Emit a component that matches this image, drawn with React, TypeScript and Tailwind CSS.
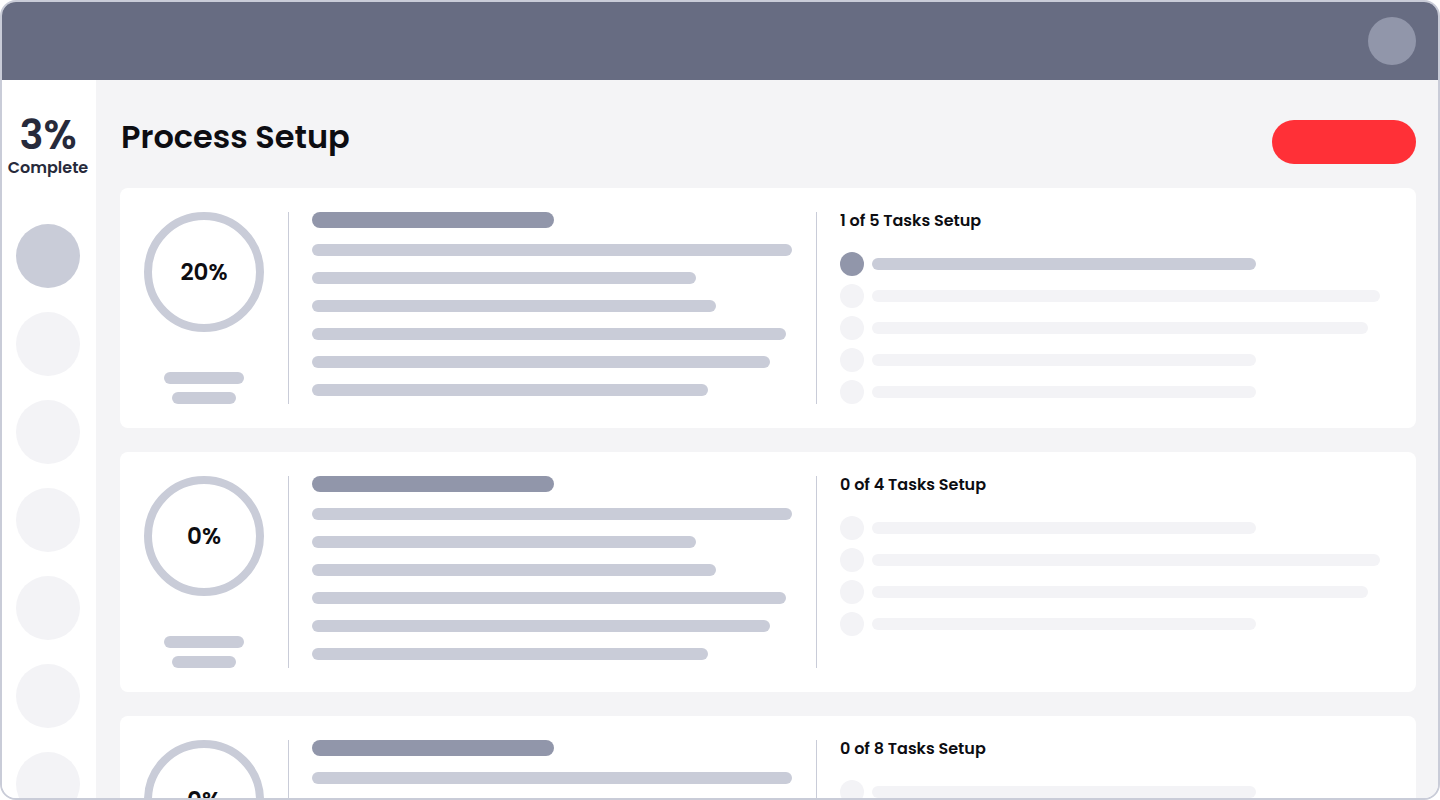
import React from "react";

const font = { fontFamily: "Poppins, Inter, 'Noto Sans', sans-serif" };

function Card({ pct, done, total, rows }: { pct: string; done: number; total: number; rows: { w: number; active?: boolean }[] }) {
  const mid = [480, 384, 404, 474, 458, 396];
  return (
    <div className="flex shrink-0 h-[240px] rounded-[8px] bg-white p-6">
      <div className="flex w-[120px] shrink-0 flex-col items-center">
        <div className="flex h-[120px] w-[120px] items-center justify-center rounded-full border-[8px] border-[#c9ccd8]">
          <span className="text-[23px] font-semibold text-[#0d0d12]">{pct}</span>
        </div>
        <div className="mt-[40px] h-3 w-[80px] rounded-full bg-[#c9ccd8]" />
        <div className="mt-2 h-3 w-[64px] rounded-full bg-[#c9ccd8]" />
      </div>
      <div className="ml-6 mr-[23px] h-[192px] w-px shrink-0 bg-[#c9ccd8]" />
      <div className="flex w-[480px] shrink-0 flex-col">
        <div className="h-4 w-[242px] rounded-full bg-[#9196aa]" />
        <div className="mt-4 flex flex-col gap-4">
          {mid.map((w, i) => (
            <div key={i} className="h-3 rounded-full bg-[#c9ccd8]" style={{ width: w }} />
          ))}
        </div>
      </div>
      <div className="ml-6 mr-[23px] h-[192px] w-px shrink-0 bg-[#c9ccd8]" />
      <div className="flex flex-1 flex-col">
        <div className="h-[16px] text-[16px] font-semibold leading-[16px] text-[#0d0d12] translate-y-[1px]">
          {done} of {total} Tasks Setup
        </div>
        <div className="mt-[24px] flex flex-col gap-2">
          {rows.map((r, i) => (
            <div key={i} className="flex h-6 items-center gap-2">
              <div className={`h-6 w-6 shrink-0 rounded-full ${r.active ? "bg-[#9196aa]" : "bg-[#f3f3f6]"}`} />
              <div className={`h-3 rounded-full ${r.active ? "bg-[#c9ccd8]" : "bg-[#f3f3f6]"}`} style={{ width: r.w }} />
            </div>
          ))}
        </div>
      </div>
    </div>
  );
}

export default function App() {
  return (
    <div style={font} className="h-[800px] w-[1440px] overflow-hidden bg-white">
      <div className="flex h-[800px] w-[1440px] flex-col overflow-hidden rounded-[16px] border-2 border-[#c9ccd8]">
        <div className="flex h-[78px] shrink-0 items-center justify-end bg-[#676c82] pr-[22px]">
          <div className="h-12 w-12 rounded-full bg-[#9196aa]" />
        </div>
        <div className="flex min-h-0 flex-1">
          <div className="flex w-[94px] shrink-0 flex-col items-center bg-white pr-[2px]">
            <div className="mt-[35px] text-[40px] font-semibold leading-[40px] text-[#272a3b]">3%</div>
            <div className="mt-[3px] text-[16px] font-semibold leading-[20px] text-[#272a3b]">Complete</div>
            <div className="mt-[46px] flex flex-col gap-6">
              <div className="h-16 w-16 shrink-0 rounded-full bg-[#c9ccd8]" />
              {[0, 1, 2, 3, 4, 5].map((i) => (
                <div key={i} className="h-16 w-16 shrink-0 rounded-full bg-[#f3f3f6]" />
              ))}
            </div>
          </div>
          <div className="flex min-w-0 flex-1 flex-col bg-[#f4f4f6] pl-6 pr-[22px] pt-[40px]">
            <div className="flex h-[44px] shrink-0 items-start justify-between">
              <h1 className="pl-px text-[32px] font-semibold leading-[34px] text-[#0d0d12]">Process Setup</h1>
              <div className="h-[44px] w-[144px] rounded-full bg-[#ff3037]" />
            </div>
            <div className="mt-6 flex flex-col gap-6">
              <Card
                pct="20%"
                done={1}
                total={5}
                rows={[{ w: 384, active: true }, { w: 508 }, { w: 496 }, { w: 384 }, { w: 384 }]}
              />
              <Card pct="0%" done={0} total={4} rows={[{ w: 384 }, { w: 508 }, { w: 496 }, { w: 384 }]} />
              <Card pct="0%" done={0} total={8} rows={[{ w: 384 }, { w: 508 }, { w: 496 }, { w: 384 }]} />
            </div>
          </div>
        </div>
      </div>
    </div>
  );
}
